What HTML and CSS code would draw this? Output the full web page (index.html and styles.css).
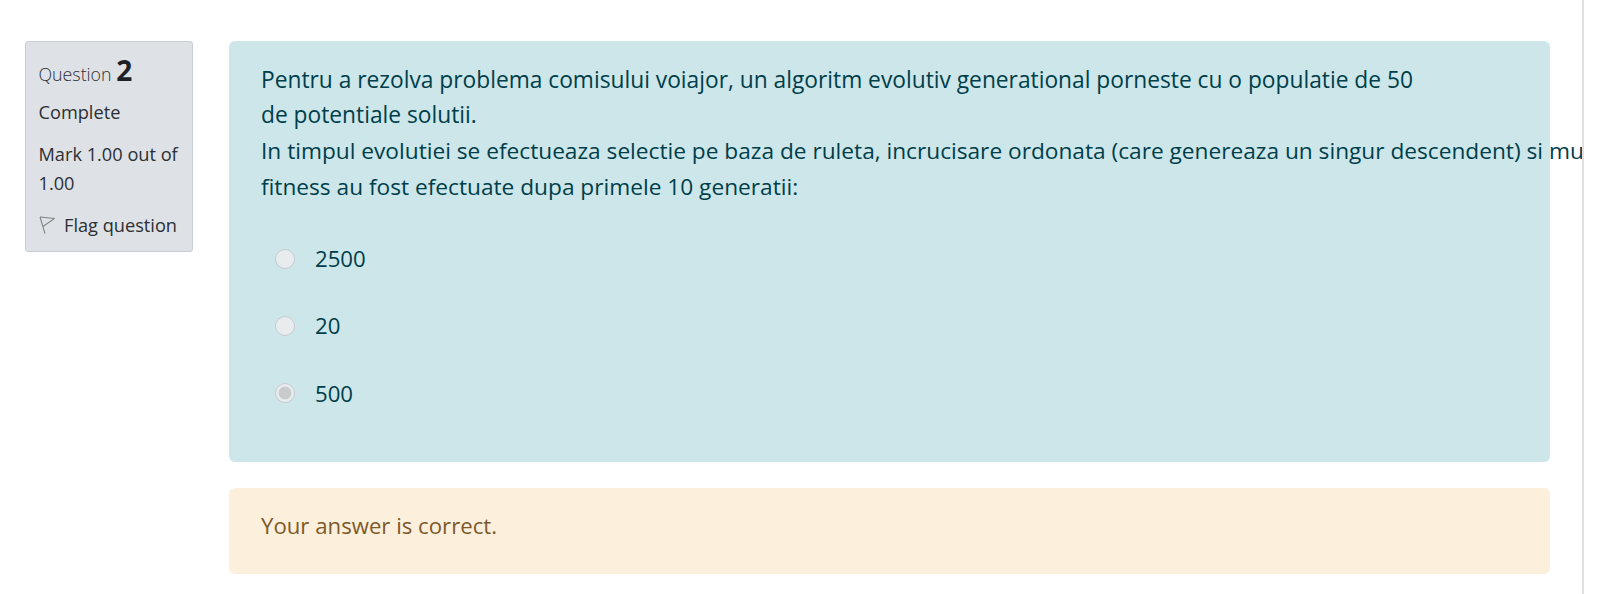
FILE: index.html
```html
<!DOCTYPE html>
<html lang="en">
<head>
<meta charset="utf-8">
<title>Question 2</title>
<link rel="stylesheet" href="styles.css">
</head>
<body>
<div class="page">
  <aside class="info">
    <h3 class="qno">Question <span class="num">2</span></h3>
    <div class="state">Complete</div>
    <div class="grade">Mark 1.00 out of 1.00</div>
    <div class="flag">
      <svg class="flag-icon" viewBox="0 0 16 18" width="16" height="18"><path d="M1 1 L6 17.5 M1 1 L15.5 2.5 L4 10.5" fill="none" stroke="#858585" stroke-width="1.1"/></svg>
      <span>Flag question</span>
    </div>
  </aside>
  <main class="content">
    <section class="formulation">
      <p class="qtext">Pentru a rezolva problema comisului voiajor, un algoritm evolutiv generational porneste cu o populatie de 50<br>de potentiale solutii.</p>
      <div class="qtext-wide">In timpul evolutiei se efectueaza selectie pe baza de ruleta, incrucisare ordonata (care genereaza un singur descendent) si mu<br>fitness au fost efectuate dupa primele 10 generatii:</div>
      <div class="answers">
        <div class="answer"><span class="radio"></span><span>2500</span></div>
        <div class="answer"><span class="radio"></span><span>20</span></div>
        <div class="answer"><span class="radio checked"></span><span>500</span></div>
      </div>
    </section>
    <section class="feedback">Your answer is correct.</section>
  </main>
  <div class="scrollbar"></div>
</div>
</body>
</html>
```
FILE: styles.css
```css
* { box-sizing: border-box; }
html, body { margin: 0; padding: 0; height: 594px; overflow: hidden; background: #fff; }
body { font-family: "Open Sans", "Noto Sans", sans-serif; color: #2b2f33; }
.page { display: flex; align-items: flex-start; width: 1600px; height: 594px; padding: 41px 0 0 25px; position: relative; overflow: hidden; }
.info { width: 168px; flex: none; height: 211px; background: #dee2e6; border: 1px solid #c8ced6; padding: 11px 0 0 12.5px; font-size: 18.2px; margin-right: 36px; border-radius: 3px; }
.qno { margin: 0; font-weight: 300; font-size: 17.8px; line-height: 34px; height: 34px; white-space: nowrap; }
.num { font-size: 28px; font-weight: 700; color: #1d2125; }
.state { margin-top: 13px; line-height: 24px; }
.grade { margin-top: 16px; line-height: 29px; padding-right: 8px; }
.flag { margin-top: 14px; display: flex; align-items: center; gap: 9.5px; line-height: 26px; white-space: nowrap; }
.flag-icon { flex: none; }
.content { width: 1321px; flex: none; }
.formulation { height: 421px; background: #cce6ea; border-radius: 6px; padding: 20.6px 32px; font-size: 22.76px; color: #003e4a; }
.qtext { margin: 0; line-height: 35.8px; }
.qtext-wide { white-space: nowrap; font-size: 22.68px; line-height: 36px; }
.answers { margin-top: 19.8px; font-size: 22.2px; }
.answer { display: flex; align-items: center; gap: 20px; height: 67.3px; padding-left: 14px; }
.radio { width: 20px; height: 20px; border-radius: 50%; background: #e9ecef; border: 1px solid #c6cccf; flex: none; }
.radio.checked { background: radial-gradient(circle, #c8cbcc 0 6px, #e9ecef 6.8px); }
.feedback { margin-top: 26px; height: 86px; background: #fcefdc; color: #7d5a29; border-radius: 6px; padding: 20px 32px; font-size: 22.2px; line-height: 35px; }
.scrollbar { position: absolute; top: 0; right: 0; width: 18px; height: 594px; background: #fff; border-left: 2px solid #e0e0e0; }
```
